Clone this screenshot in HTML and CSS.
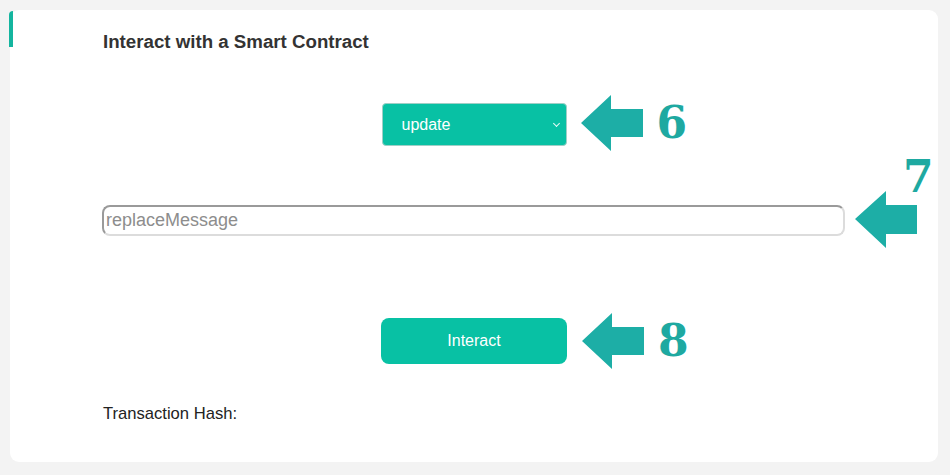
FILE: index.html
```html
<!DOCTYPE html>
<html lang="en">
<head>
    <meta charset="UTF-8">
    <title>Interact with a Smart Contract</title>
    <link rel="stylesheet" href="styles.css">
</head>
<body>

<main class="card">
    <h2 class="card-title">Interact with a Smart Contract</h2>

    <div class="row row-method">
        <div class="pick">
            <select class="method">
                <option>update</option>
                <option>message</option>
            </select>
            <div class="note note-6">
                <svg class="arrow" width="62" height="56" viewBox="0 0 62 56"><polygon points="0,28 30,0 30,14 62,14 62,42 30,42 30,56"/></svg>
                <span class="step">6</span>
            </div>
        </div>
    </div>

    <div class="row row-arg">
        <div class="pick pick-wide">
            <input class="arg" type="text" placeholder="replaceMessage">
            <div class="note note-7">
                <svg class="arrow" width="62" height="57" viewBox="0 0 62 57"><polygon points="0,28 31,0 31,14 62,14 62,43 31,43 31,57"/></svg>
            </div>
            <span class="step step-7">7</span>
        </div>
    </div>

    <div class="row row-btn">
        <div class="pick">
            <button class="btn-interact" type="button">Interact</button>
            <div class="note note-8">
                <svg class="arrow" width="62" height="56" viewBox="0 0 62 56"><polygon points="0,28 30,0 30,14 62,14 62,42 30,42 30,56"/></svg>
                <span class="step">8</span>
            </div>
        </div>
    </div>

    <p class="tx-hash">Transaction Hash:</p>
</main>

</body>
</html>
```

FILE: styles.css
```css
body {
    margin: 0;
    padding: 10px 12px 13px 10px;
    background: #f3f3f3;
    font-family: 'Liberation Sans', Arial, sans-serif;
    color: #333;
}

.card {
    position: relative;
    background: #fff;
    border-radius: 9px;
    height: 452px;
    box-sizing: border-box;
    padding: 22px 93px 0 93px;
}

.card::before {
    content: '';
    position: absolute;
    left: -1px;
    top: 1px;
    width: 4px;
    height: 36px;
    background: #14b59f;
    border-top-left-radius: 4px;
}

.card-title {
    margin: 0;
    font-size: 18.7px;
    line-height: 20px;
    font-weight: bold;
    color: #333;
}

.row {
    display: flex;
    justify-content: center;
}

.row-method {
    margin-top: 51px;
}

.row-arg {
    margin-top: 59px;
}

.row-btn {
    margin-top: 82px;
}

.pick {
    position: relative;
}

.pick-wide {
    width: 743px;
    margin-left: -1px;
}

.method {
    appearance: none;
    -webkit-appearance: none;
    width: 185px;
    height: 43px;
    padding: 0 19px;
    background: #08c1a4;
    color: #fff;
    border: 1px solid #9fcfc6;
    border-radius: 4px;
    font-family: 'Liberation Sans', Arial, sans-serif;
    font-size: 16px;
    outline: none;
}

.pick:has(.method)::after {
    content: '';
    position: absolute;
    left: 172px;
    top: 18px;
    width: 4px;
    height: 4px;
    border-right: 1.5px solid #e8faf6;
    border-bottom: 1.5px solid #e8faf6;
    transform: rotate(45deg);
    pointer-events: none;
}

.arg {
    display: block;
    width: 100%;
    height: 31px;
    box-sizing: border-box;
    padding: 0 2px;
    border-width: 2px;
    border-style: solid;
    border-color: #9a9a9a #dcdcdc #dcdcdc #9a9a9a;
    border-radius: 8px;
    font-family: 'Liberation Sans', Arial, sans-serif;
    font-size: 18px;
    color: #333;
    outline: none;
}

.arg::placeholder {
    color: #8d8d8d;
}

.btn-interact {
    width: 186px;
    height: 46px;
    background: #08c1a4;
    color: #fff;
    border: none;
    border-radius: 8px;
    font-family: 'Liberation Sans', Arial, sans-serif;
    font-size: 16px;
    cursor: pointer;
}

.tx-hash {
    margin: 41px 0 0 0;
    font-size: 16.6px;
    line-height: 18px;
    color: #222;
}

/* annotation arrows laid over the form */
.note {
    position: absolute;
    display: flex;
    align-items: center;
    gap: 14px;
}

.note-6 {
    left: calc(100% + 14px);
    top: -8px;
}

.note-7 {
    left: calc(100% + 10px);
    top: -14px;
}

.note-8 {
    left: calc(100% + 15px);
    top: -5px;
}

.arrow polygon {
    fill: #1daea6;
}

.step {
    font-family: 'DejaVu Serif', Georgia, serif;
    font-weight: bold;
    font-size: 44px;
    line-height: 48px;
    color: #1ea9a1;
}

.step-7 {
    position: absolute;
    left: calc(100% + 58px);
    top: -52px;
}
```
